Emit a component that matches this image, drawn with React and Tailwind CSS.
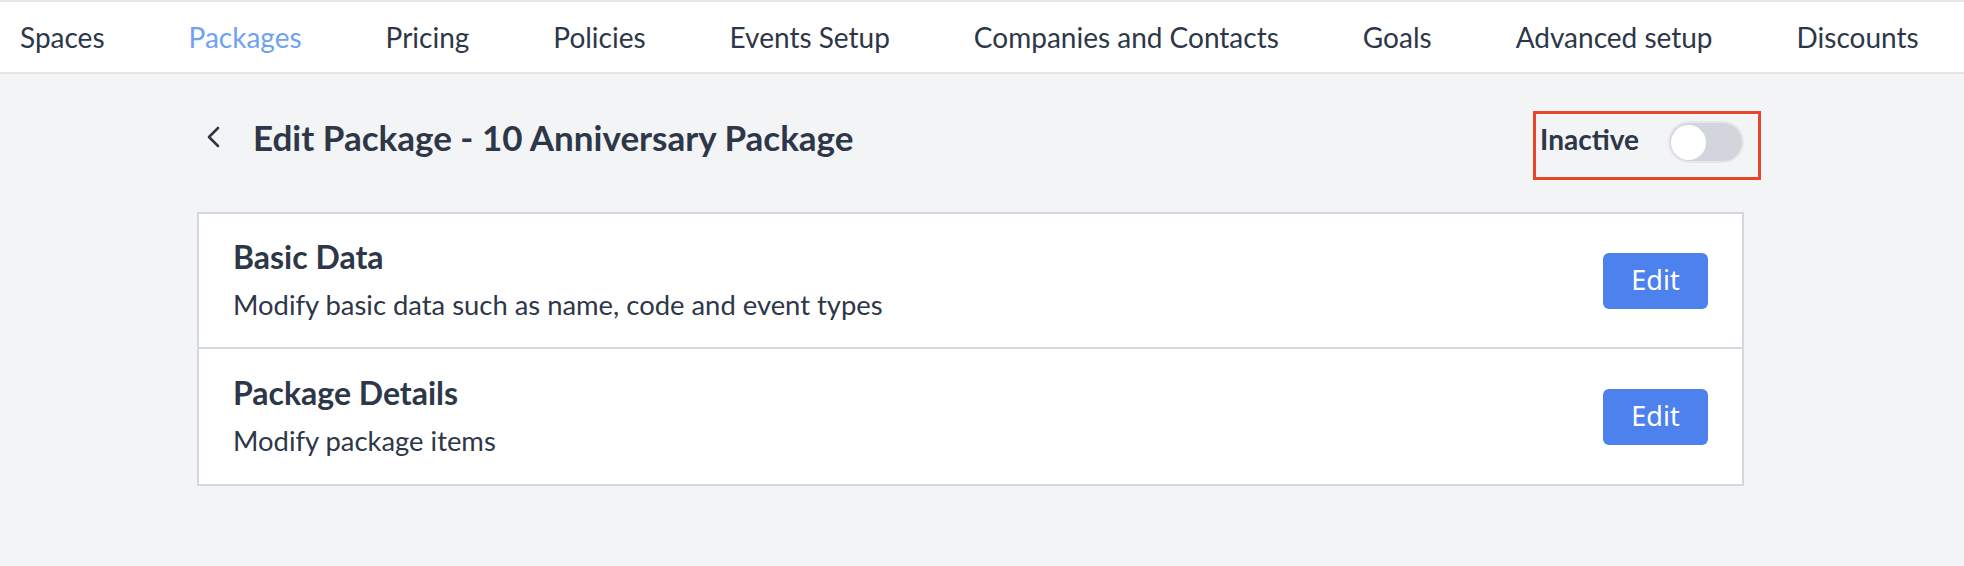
import React from "react";

const navItems = [
  "Spaces",
  "Packages",
  "Pricing",
  "Policies",
  "Events Setup",
  "Companies and Contacts",
  "Goals",
  "Advanced setup",
  "Discounts",
];

function Row({ title, desc, last }) {
  return (
    <div
      className={
        "flex items-center justify-between h-[135px] pl-[34px] pr-[34px] " +
        (last ? "" : "border-b-2 border-[#d4d7de]")
      }
    >
      <div className="flex flex-col">
        <div className="text-[32px] font-bold leading-[40px] text-[#2d3748]">{title}</div>
        <div className="text-[27.4px] leading-[40px] mt-[8px] text-[#2d3748]">{desc}</div>
      </div>
      <button className="w-[105px] h-[56px] rounded-[6px] bg-[#4d82ee] text-white text-[27px] font-['Noto_Sans',sans-serif]">
        Edit
      </button>
    </div>
  );
}

export default function App() {
  return (
    <div className="min-h-[566px] w-[1964px] bg-[#f3f4f6] font-['Lato',sans-serif] text-[#2d3748]">
      <div className="border-t-2 border-b-2 border-[#e4e5e9] bg-white h-[74px] flex items-center pl-[20px] gap-[84px]">
        {navItems.map((n) => (
          <span
            key={n}
            className={"text-[28px] leading-none " + (n === "Packages" ? "text-[#6fa2f3]" : "text-[#2d3748]")}
          >
            {n}
          </span>
        ))}
      </div>

      <div className="ml-[197px] w-[1547px]">
        <div className="flex items-center justify-between h-[138px] pb-[12px]">
          <div className="flex items-center">
            <svg width="40" height="24" viewBox="0 0 40 24" className="ml-[4px]">
              <path d="M17 3 L8 12 L17 21" fill="none" stroke="#2d3748" strokeWidth="2.6" strokeLinecap="round" strokeLinejoin="round" />
            </svg>
            <h1 className="ml-[12px] text-[35px] font-bold leading-none">Edit Package - 10 Anniversary Package</h1>
          </div>
          <div className="relative flex items-center mt-[10px]">
            <div className="absolute left-[-7px] right-[-17px] top-[-10px] bottom-[-17px] border-[3px] border-[#e8452b]" />
            <span className="text-[28px] font-bold leading-none mr-[29px] mb-[6px]">Inactive</span>
            <div className="w-[76px] h-[42px] rounded-full bg-[#d2d5dc] border-[2px] border-[#e6e7eb] flex items-center pl-[1px]">
              <div className="w-[35px] h-[35px] rounded-full bg-white" />
            </div>
          </div>
        </div>

        <div className="border-2 border-[#d4d7de] bg-white">
          <Row title="Basic Data" desc="Modify basic data such as name, code and event types" />
          <Row title="Package Details" desc="Modify package items" last />
        </div>
      </div>
    </div>
  );
}
